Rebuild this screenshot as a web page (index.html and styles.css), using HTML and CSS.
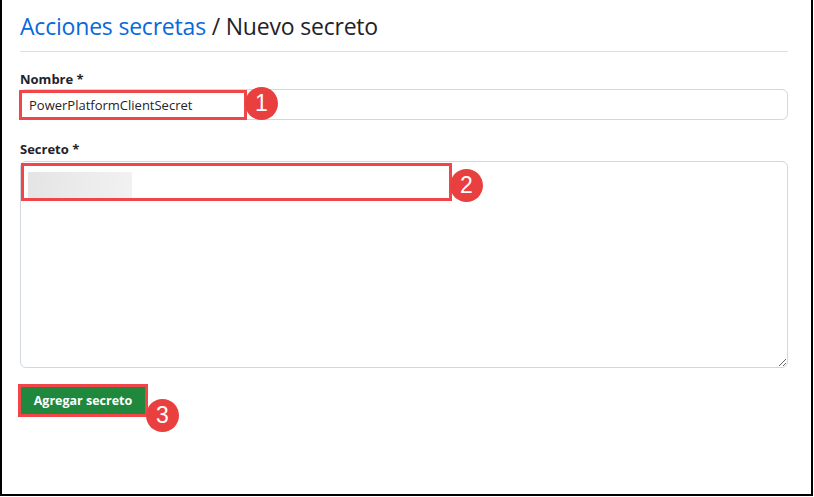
FILE: index.html
```html
<!DOCTYPE html>
<html lang="es">
<head>
<meta charset="utf-8">
<title>Nuevo secreto</title>
<link rel="stylesheet" href="styles.css">
</head>
<body>
<div class="frame">
  <div class="content">
    <h1 class="title"><a class="crumb" href="#">Acciones secretas</a> / Nuevo secreto</h1>
    <form class="form">
      <label class="label" for="name">Nombre *</label>
      <div class="field">
        <input class="input" id="name" value="PowerPlatformClientSecret">
        <span class="mark mark-1"></span>
        <span class="badge badge-1">1</span>
      </div>
      <label class="label label-secret" for="secret">Secreto *</label>
      <div class="field">
        <textarea class="textarea" id="secret"></textarea>
        <span class="blur"></span>
        <span class="mark mark-2"></span>
        <span class="badge badge-2">2</span>
      </div>
      <div class="actions">
        <button class="btn" type="button">Agregar secreto</button>
        <span class="mark mark-3"></span>
        <span class="badge badge-3">3</span>
      </div>
    </form>
  </div>
</div>
</body>
</html>
```
FILE: styles.css
```css
* { box-sizing: border-box; }
html, body { margin: 0; padding: 0; background: #fff; }
body {
  font-family: "Open Sans", "Noto Sans", "Liberation Sans", sans-serif;
  color: #1f2328;
}
.frame {
  width: 813px;
  height: 496px;
  border-left: 2px solid #000;
  border-right: 2px solid #000;
  border-bottom: 2px solid #000;
}
.content {
  padding-left: 18px;
  width: 786px;
}
.title {
  margin: 0;
  padding-top: 10px;
  padding-bottom: 9px;
  font-size: 23px;
  line-height: 32px;
  font-weight: 400;
  border-bottom: 1px solid #d8dee4;
  letter-spacing: -0.2px;
}
.crumb { color: #0969da; text-decoration: none; }
.form { display: flex; flex-direction: column; }
.label {
  display: block;
  margin-top: 17px;
  font-size: 13px;
  line-height: 20px;
  font-weight: 700;
}
.label-secret { margin-top: 19px; margin-bottom: 2px; }
.field { position: relative; }
.input {
  display: block;
  width: 768px;
  height: 31px;
  border: 1px solid #d0d7de;
  border-radius: 6px;
  padding: 0 8px;
  font-family: inherit;
  font-size: 13px;
  color: #1f2328;
  background: #fff;
  outline: none;
}
.textarea {
  display: block;
  width: 768px;
  height: 207px;
  border: 1px solid #d0d7de;
  border-radius: 6px;
  resize: vertical;
  background: #fff;
  outline: none;
  margin: 0;
}
.blur {
  position: absolute;
  left: 8px;
  top: 11px;
  width: 104px;
  height: 26px;
  background: linear-gradient(100deg, #e4e4e4 0%, #ececec 55%, #f3f1f1 100%);
}
.mark {
  position: absolute;
  border: 3px solid #f0464a;
}
.mark-1 { left: -1px; top: 1px; width: 228px; height: 30px; }
.mark-2 { left: 1px; top: 2px; width: 431px; height: 38px; }
.mark-3 { left: -2px; top: -1px; width: 130px; height: 33px; }
.badge {
  position: absolute;
  width: 33px;
  height: 33px;
  border-radius: 50%;
  background: #e9403f;
  color: #fff;
  font-family: "Liberation Sans", Arial, sans-serif;
  font-size: 23px;
  line-height: 33px;
  text-align: center;
}
.badge-1 { left: 225px; top: -2px; }
.badge-2 { left: 430px; top: 8px; }
.badge-3 { left: 126px; top: 14px; }
.actions {
  position: relative;
  margin-top: 17px;
  align-self: flex-start;
}
.btn {
  display: block;
  width: 126px;
  height: 31px;
  border: 1px solid rgba(31, 35, 40, 0.15);
  border-radius: 0;
  background: #1f883d;
  color: #fff;
  font-family: inherit;
  font-size: 12.5px;
  font-weight: 700;
  padding: 0;
}
```
